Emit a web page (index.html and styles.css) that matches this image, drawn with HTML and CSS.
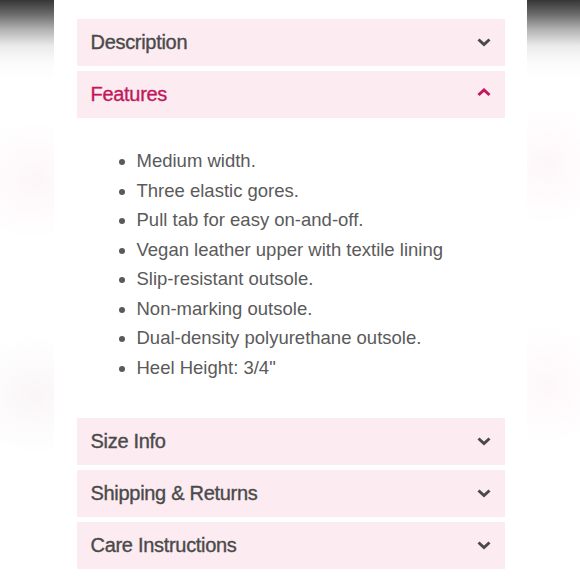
FILE: index.html
```html
<!DOCTYPE html>
<html lang="en">
<head>
    <meta charset="UTF-8">
    <meta name="viewport" content="width=device-width, initial-scale=1.0">
    <title>Product Details</title>
    <link rel="stylesheet" href="styles.css">
</head>
<body>
    <div class="panel">
        <div class="accordion">
            <div class="acc-head">
                <span>Description</span>
                <svg class="chevron" width="14" height="9" viewBox="0 0 14 9"><polyline points="1.5,1.5 7,6.5 12.5,1.5"/></svg>
            </div>

            <div class="acc-head open">
                <span>Features</span>
                <svg class="chevron" width="14" height="9" viewBox="0 0 14 9"><polyline points="1.5,7 7,2 12.5,7"/></svg>
            </div>
            <div class="acc-body">
                <ul>
                    <li>Medium width.</li>
                    <li>Three elastic gores.</li>
                    <li>Pull tab for easy on-and-off.</li>
                    <li>Vegan leather upper with textile lining</li>
                    <li>Slip-resistant outsole.</li>
                    <li>Non-marking outsole.</li>
                    <li>Dual-density polyurethane outsole.</li>
                    <li>Heel Height: 3/4"</li>
                </ul>
            </div>

            <div class="acc-head">
                <span>Size Info</span>
                <svg class="chevron" width="14" height="9" viewBox="0 0 14 9"><polyline points="1.5,1.5 7,6.5 12.5,1.5"/></svg>
            </div>

            <div class="acc-head">
                <span>Shipping &amp; Returns</span>
                <svg class="chevron" width="14" height="9" viewBox="0 0 14 9"><polyline points="1.5,1.5 7,6.5 12.5,1.5"/></svg>
            </div>

            <div class="acc-head">
                <span>Care Instructions</span>
                <svg class="chevron" width="14" height="9" viewBox="0 0 14 9"><polyline points="1.5,1.5 7,6.5 12.5,1.5"/></svg>
            </div>
        </div>
    </div>
</body>
</html>
```

FILE: styles.css
```css
html, body {
    height: 100%;
}
body {
    margin: 0;
    padding: 0;
    font-family: "Liberation Sans", Arial, sans-serif;
    background:
        radial-gradient(ellipse 70px 60px at 35px 180px, rgba(250, 228, 234, 0.35), rgba(255, 255, 255, 0)),
        radial-gradient(ellipse 70px 60px at 545px 165px, rgba(252, 230, 236, 0.35), rgba(255, 255, 255, 0)),
        radial-gradient(ellipse 70px 60px at 35px 395px, rgba(240, 228, 232, 0.35), rgba(255, 255, 255, 0)),
        radial-gradient(ellipse 70px 60px at 545px 385px, rgba(252, 232, 237, 0.35), rgba(255, 255, 255, 0)),
        linear-gradient(to bottom, #363636 0px, #6a6a6a 14px, #b4b4b4 30px, #ebebeb 46px, #fbfbfb 62px, #ffffff 80px);
    background-repeat: no-repeat;
}
.panel {
    height: 100%;
    margin: 0 auto;
    padding: 19px 22px 0 23px;
    box-sizing: border-box;
    width: 473px;
    background-color: #ffffff;
}
.accordion {
    display: flex;
    flex-direction: column;
    gap: 5px;
}
.acc-head {
    height: 47px;
    display: flex;
    align-items: center;
    justify-content: space-between;
    padding: 0 14px;
    background-color: #fcebf1;
    color: #4a4a4a;
    font-size: 20px;
    letter-spacing: -0.3px;
    -webkit-text-stroke: 0.35px currentColor;
}
.acc-head.open {
    color: #c2185b;
}
.chevron {
    fill: none;
    stroke: #4a4a4a;
    stroke-width: 3;
}
.acc-head.open .chevron {
    stroke: #c2185b;
    margin-top: -4px;
}
.acc-body {
    padding: 23px 0 31px;
}
.acc-body ul {
    margin: 0;
    padding-left: 60px;
    color: #5a5a5a;
    font-size: 18.5px;
    line-height: 29.5px;
}
```
